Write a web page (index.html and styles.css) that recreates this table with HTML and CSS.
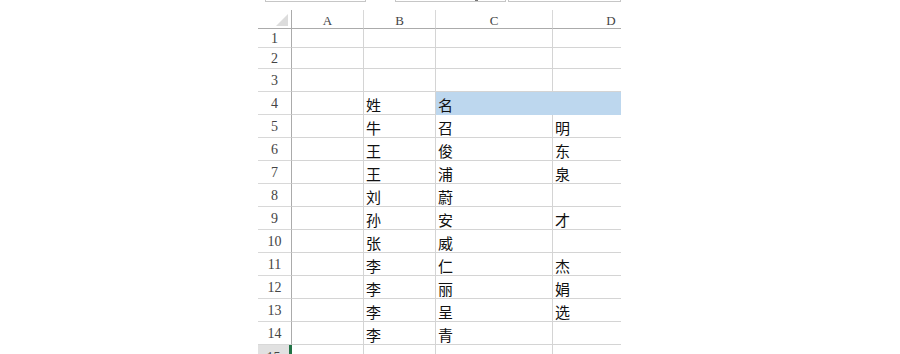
FILE: index.html
```html
<!DOCTYPE html>
<html lang="zh">
<head>
<meta charset="utf-8">
<link rel="stylesheet" href="styles.css">
</head>
<body>
<div class="page">
  <div class="topbar">
    <div class="box box1"></div>
    <div class="box box2"><span class="arrow"></span></div>
    <div class="box box3"></div>
  </div>
  <div class="sheet">
    <div class="grid">
      <div class="corner"><svg width="12" height="12" viewBox="0 0 12 12"><polygon points="12,0 12,12 0,12" fill="#dcdcdc"/></svg></div>
      <div class="ch">A</div><div class="ch">B</div><div class="ch">C</div><div class="ch">D</div>

      <div class="rh r1">1</div><div class="c r1"></div><div class="c r1"></div><div class="c r1"></div><div class="c r1"></div>
      <div class="rh r2">2</div><div class="c r2"></div><div class="c r2"></div><div class="c r2"></div><div class="c r2"></div>
      <div class="rh">3</div><div class="c"></div><div class="c"></div><div class="c"></div><div class="c"></div>
      <div class="rh">4</div><div class="c"></div><div class="c">姓</div><div class="c fill">名</div><div class="c fill nob"></div>
      <div class="rh">5</div><div class="c"></div><div class="c">牛</div><div class="c">召</div><div class="c">明</div>
      <div class="rh">6</div><div class="c"></div><div class="c">王</div><div class="c">俊</div><div class="c">东</div>
      <div class="rh">7</div><div class="c"></div><div class="c">王</div><div class="c">浦</div><div class="c">泉</div>
      <div class="rh">8</div><div class="c"></div><div class="c">刘</div><div class="c">蔚</div><div class="c"></div>
      <div class="rh">9</div><div class="c"></div><div class="c">孙</div><div class="c">安</div><div class="c">才</div>
      <div class="rh">10</div><div class="c"></div><div class="c">张</div><div class="c">威</div><div class="c"></div>
      <div class="rh">11</div><div class="c"></div><div class="c">李</div><div class="c">仁</div><div class="c">杰</div>
      <div class="rh">12</div><div class="c"></div><div class="c">李</div><div class="c">丽</div><div class="c">娟</div>
      <div class="rh">13</div><div class="c"></div><div class="c">李</div><div class="c">呈</div><div class="c">选</div>
      <div class="rh">14</div><div class="c"></div><div class="c">李</div><div class="c">青</div><div class="c"></div>
      <div class="rh active">15</div><div class="c"></div><div class="c"></div><div class="c"></div><div class="c"></div>
    </div>
  </div>
</div>
</body>
</html>
```

FILE: styles.css
```css
* { box-sizing: border-box; }
html, body { margin: 0; padding: 0; background: #fff; }
body { width: 900px; height: 354px; overflow: hidden; }

.page {
  padding-left: 258px;
  width: 900px;
}

.topbar {
  display: flex;
  height: 10px;
  align-items: flex-start;
}
.box {
  height: 2px;
  border: 1px solid #c6c6c6;
  border-top: none;
  position: relative;
}
.box1 { margin-left: 7px; width: 101px; }
.box2 { margin-left: 29px; width: 111px; }
.box3 { margin-left: 2px; width: 113px; }
.arrow {
  position: absolute;
  right: 27px;
  top: 0;
  width: 3px;
  height: 1px;
  background: #777;
}

.sheet {
  width: 363px;
  height: 344px;
  overflow: hidden;
}

.grid {
  display: grid;
  grid-template-columns: 34px 72px 72px 117px 117px;
  grid-template-rows: 19px 19px 21px repeat(12, 23px);
  width: 412px;
  font-family: "Noto Sans CJK SC", sans-serif;
}

.corner, .ch, .rh {
  font-family: "Liberation Serif", "DejaVu Serif", serif;
  color: #444;
  font-size: 13px;
}

.corner {
  border-right: 1px solid #ababab;
  border-bottom: 1px solid #ababab;
  display: flex;
  align-items: flex-end;
  justify-content: flex-end;
  padding: 0 3px 2px 0;
}
.ch {
  border-right: 1px solid #d8d8d8;
  border-bottom: 1px solid #ababab;
  display: flex;
  align-items: center;
  justify-content: center;
  padding-top: 4px;
}
.rh {
  border-right: 1px solid #ababab;
  border-bottom: 1px solid #d8d8d8;
  display: flex;
  align-items: center;
  justify-content: center;
  font-size: 14px;
  padding-top: 1px;
}
.rh.active {
  background: #e1e1e1;
  border-right: 3px solid #217346;
  align-items: flex-start;
  padding-top: 5px;
  padding-right: 0;
}
.c {
  border-right: 1px solid #d4d4d4;
  border-bottom: 1px solid #d4d4d4;
  font-size: 15px;
  line-height: 1;
  color: #111;
  display: flex;
  align-items: center;
  padding: 2px 0 0 2px;
}
.fill {
  background: #bdd7ee;
  border-bottom-color: #bdd7ee;
}
.fill { border-right-color: #bdd7ee; }
.nob { border-right-color: #bdd7ee; }
```
